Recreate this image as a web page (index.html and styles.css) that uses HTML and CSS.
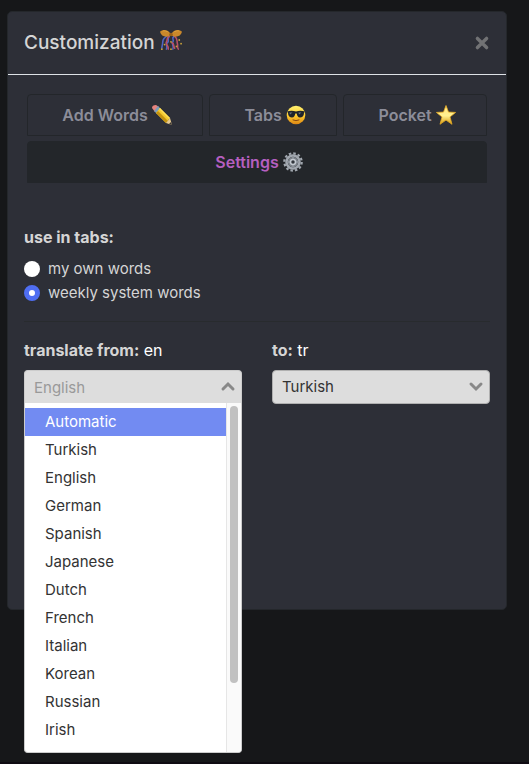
FILE: index.html
```
<!DOCTYPE html>
<html lang="en">
<head>
<meta charset="utf-8">
<meta name="viewport" content="width=device-width, initial-scale=1">
<title>Customization</title>
<link rel="stylesheet" href="styles.css">
</head>
<body>
<main class="modal" role="dialog" aria-labelledby="title">
  <header class="modal-header">
    <h1 class="modal-title" id="title">Customization
      <svg class="emoji emoji-title" viewBox="0 0 24 24" aria-hidden="true">
        <g fill="none" stroke-width="1.7" stroke-linecap="round" stroke-linejoin="round">
          <path stroke="#4f66c4" d="M9 7C5 9 3 11 3 14s-1 5-1 7M10 8c-3 3 1 5-2 7s1 4-1 7M15 8c-3 3 1 4-1 6s2 5 0 8"/>
          <path stroke="#b9506a" d="M10 8c-4 2-1 4-3 6s3 4 2 8M16 8c4 3 2 5 3 8s-1 3 1 6M13 15c3 1 1 3 3 6"/>
        </g>
        <g fill="#c9a23a"><circle cx="2" cy="22" r="1"/><circle cx="21" cy="12" r="1"/><circle cx="23" cy="16" r="1"/><circle cx="12" cy="14" r="1"/><circle cx="12" cy="22" r="1"/><circle cx="5" cy="17" r="1"/><circle cx="18" cy="19" r="1"/></g>
        <path fill="#c9882b" d="M12 6C9 0 3 0 0 3c1 5 7 7 11 4h2c4 3 10 1 11-4-3-3-9-3-12 3z"/>
        <path fill="#e0a63f" d="M10 4C7 1 4 1 2 3c3-1 5 0 8 1zM14 4c3-3 6-3 8-1-3-1-5 0-8 1z"/>
        <circle cx="12" cy="6" r="2" fill="#986019"/>
      </svg>
    </h1>
    <button class="close" type="button" aria-label="Close">
      <svg viewBox="0 0 14 14" aria-hidden="true"><path d="M3 3l8 8M11 3l-8 8"/></svg>
    </button>
  </header>

  <div class="modal-body">
    <nav class="tabs" aria-label="Sections">
      <button class="tab" type="button">Add Words
        <svg class="emoji" viewBox="0 0 20 20" aria-hidden="true">
          <path fill="#e7837e" d="M0 3Q0 0 4 0l3 2-4 5z"/>
          <path fill="#7b9cb8" d="M6 1l3 3-4 5-3-3z"/>
          <path fill="#f4c92f" d="M8 3l10 10-4 5L4 8z"/>
          <path fill="#c4920f" d="M6 6L4 8l10 10 2-2z"/>
          <path fill="#ffdf57" d="M8 3l10 10-1 1L7 4z"/>
          <path fill="#e8cb91" d="M18 13l2 7-6-2z"/>
          <path fill="#3a3633" d="M19 17l1 3-3-1z"/>
        </svg>
      </button>
      <button class="tab" type="button">Tabs
        <svg class="emoji" viewBox="0 0 20 20" aria-hidden="true">
          <defs><linearGradient id="face" x2="0" y2="1"><stop stop-color="#fff070"/><stop offset=".55" stop-color="#ffcb2e"/><stop offset="1" stop-color="#dc8413"/></linearGradient></defs>
          <circle cx="10" cy="10" r="9.3" fill="url(#face)"/>
          <path fill="#20242a" d="M1 6.500c3-1 6-1 9 0 3-1 6-1 9 0l-1 1.500c0 3-2 4.500-4 4.500s-3-2-3.300-4H9.300c-.3 2-1.300 4-3.300 4s-4-1.500-4-4.500z"/>
          <path fill="#6d7780" d="M3.500 7.500h3l-2.500 2zM12.500 7.500h3l-2.500 2z"/>
          <path fill="none" stroke="#884810" stroke-linecap="round" d="M7 15q3 1.500 6 0"/>
        </svg>
      </button>
      <button class="tab" type="button">Pocket
        <svg class="emoji" viewBox="0 0 20 20" aria-hidden="true">
          <defs><linearGradient id="gold" x2="0" y2="1"><stop stop-color="#ffe47b"/><stop offset=".55" stop-color="#fff192"/><stop offset="1" stop-color="#d69909"/></linearGradient></defs>
          <path fill="url(#gold)" stroke="#e7ab24" stroke-width=".8" stroke-linejoin="round" d="M10 .5l2.500 6.600 7.100.3-5.600 4.500 2 7.400-6-4.200-6 4.200 2-7.400L.4 7.400l7.100-.3z"/>
        </svg>
      </button>
      <button class="tab tab-active" type="button" aria-current="page">Settings
        <svg class="emoji" viewBox="0 0 20 20" aria-hidden="true">
          <circle cx="10" cy="10" r="8.700" fill="none" stroke="#a1a7af" stroke-width="2.200" stroke-dasharray="2.500 2.055"/>
          <circle cx="10" cy="10" r="6.500" fill="none" stroke="#a1a7af" stroke-width="2.600"/>
          <circle cx="10" cy="10" r="5.200" fill="#7b8189"/>
          <path stroke="#9299a1" stroke-width="1.400" d="M10 5v10M5 10h10"/>
          <circle cx="10" cy="10" r="2.500" fill="#30353b" stroke="#c3c9d0" stroke-width="1.500"/>
        </svg>
      </button>
    </nav>

    <form class="settings">
      <fieldset class="source">
        <legend>use in tabs:</legend>
        <label class="choice"><input type="radio" name="source"><span>my own words</span></label>
        <label class="choice"><input type="radio" name="source" checked><span>weekly system words</span></label>
      </fieldset>
      <hr>
      <div class="languages">
        <div class="language">
          <div class="language-label"><label for="from">translate from:</label> <span>en</span></div>
          <div class="picker picker-open">
            <input class="field" id="from" type="text" placeholder="English" role="combobox" aria-expanded="true" aria-controls="from-list" autocomplete="off">
            <svg class="chevron" viewBox="0 0 16 16" aria-hidden="true"><path d="M3 10l5-5 5 5"/></svg>
            <div class="dropdown">
              <ul class="options" id="from-list">
                <li><button class="option option-active" type="button">Automatic</button></li>
                <li><button class="option" type="button">Turkish</button></li>
                <li><button class="option" type="button">English</button></li>
                <li><button class="option" type="button">German</button></li>
                <li><button class="option" type="button">Spanish</button></li>
                <li><button class="option" type="button">Japanese</button></li>
                <li><button class="option" type="button">Dutch</button></li>
                <li><button class="option" type="button">French</button></li>
                <li><button class="option" type="button">Italian</button></li>
                <li><button class="option" type="button">Korean</button></li>
                <li><button class="option" type="button">Russian</button></li>
                <li><button class="option" type="button">Irish</button></li>
              </ul>
              <div class="track"><div class="thumb"></div></div>
            </div>
          </div>
        </div>
        <div class="language">
          <div class="language-label"><label for="to">to:</label> <span>tr</span></div>
          <div class="picker">
            <select class="field" id="to"><option>Turkish</option></select>
            <svg class="chevron" viewBox="0 0 16 16" aria-hidden="true"><path d="M3 5l5 5 5-5"/></svg>
          </div>
        </div>
      </div>
    </form>
  </div>
</main>
</body>
</html>
```
FILE: styles.css
```
* {
  box-sizing: border-box;
}

body {
  margin: 0;
  min-height: 100vh;
  padding: 11px 22px 0 7px;
  background: #161719;
  border-bottom: 2px solid #0f0b12;
  color: #d5d5d5;
  font: 16px/24px Inter, "Liberation Sans", sans-serif;
}

button,
input,
select {
  font: inherit;
}

.modal {
  min-height: 599px;
  background: #2d2f37;
  border: 1px solid #24272b;
  border-radius: 5px;
}

.modal-header {
  display: flex;
  align-items: center;
  justify-content: space-between;
  padding: 16px;
  border-bottom: 1px solid #dee2e6;
}

.modal-title {
  margin: 0;
  font-size: 19px;
  line-height: 30px;
  font-weight: 500;
}

.close {
  display: flex;
  padding: 0;
  background: none;
  border: 0;
}

.close svg {
  width: 16px;
  height: 16px;
  fill: none;
  stroke: #717274;
  stroke-width: 3;
  stroke-linecap: round;
}

.emoji {
  width: 20px;
  height: 20px;
  vertical-align: -4px;
}

.emoji-title {
  width: 22px;
  height: 22px;
  vertical-align: -2px;
}

.modal-body {
  padding: 19px 16px 16px;
}

.tabs {
  display: flex;
  flex-wrap: wrap;
  gap: 5px 6px;
  margin: 0 3px;
}

.tab {
  flex: 1 1 auto;
  padding: 8px 14px 8px 18px;
  background: none;
  border: 1px solid #23262a;
  border-radius: 4px 4px 0 0;
  color: #8c8d99;
  font-weight: 600;
  line-height: 24px;
}

.tab-active {
  flex-basis: 100%;
  background: #23262a;
  color: #b65fc0;
}

.source {
  margin: 42px 0 16px;
  padding: 0;
  border: 0;
}

.source legend {
  padding: 0;
  margin-bottom: 8px;
  font-weight: 700;
}

.choice {
  display: flex;
  align-items: center;
  gap: 8px;
  font-size: 15px;
}

.choice input {
  appearance: none;
  width: 16px;
  height: 16px;
  margin: 0;
  background: #fff;
  border-radius: 50%;
}

.choice input:checked {
  background: #fff;
  border: 5px solid #4f6ef2;
}

hr {
  margin: 0 0 16px;
  border: 0;
  border-top: 1px solid #282b2e;
}

.languages {
  display: grid;
  grid-template-columns: 1fr 1fr;
  gap: 30px;
}

.language-label {
  margin-bottom: 8px;
}

.language-label label {
  font-weight: 700;
}

.language-label span {
  color: #fff;
}

.picker {
  position: relative;
  font-size: 15px;
}

.field {
  appearance: none;
  display: block;
  width: 100%;
  height: 34px;
  padding: 0 32px 0 9px;
  background: #ddd;
  border: 1px solid #b0b0b0;
  border-radius: 4px;
  color: #333;
}

.field::placeholder {
  color: #999;
  opacity: 1;
}

.picker-open .field {
  border-color: #ccc;
  border-bottom-color: #ddd;
  border-radius: 4px 4px 0 0;
}

.chevron {
  position: absolute;
  top: 9px;
  right: 6px;
  width: 16px;
  height: 16px;
  fill: none;
  stroke: #888;
  stroke-width: 3;
  stroke-linecap: round;
  pointer-events: none;
}

.dropdown {
  position: absolute;
  top: 33px;
  left: 0;
  right: 0;
  display: flex;
  height: 350px;
  overflow: hidden;
  background: #fff;
  border: 1px solid #ccc;
  border-top: 0;
  border-radius: 0 0 4px 4px;
}

.options {
  flex: 1;
  margin: 0;
  padding: 5px 0;
  list-style: none;
}

.option {
  display: block;
  width: 100%;
  padding: 2px 20px;
  background: none;
  border: 0;
  color: #333;
  line-height: 24px;
  text-align: left;
}

.option-active {
  background: #728bf2;
  color: #fff;
}

.track {
  width: 15px;
  padding: 3px;
  background: #fafafa;
  border-left: 1px solid #e6e6e6;
}

.thumb {
  width: 8px;
  height: 277px;
  background: #c1c1c1;
  border-radius: 4px;
}
```
